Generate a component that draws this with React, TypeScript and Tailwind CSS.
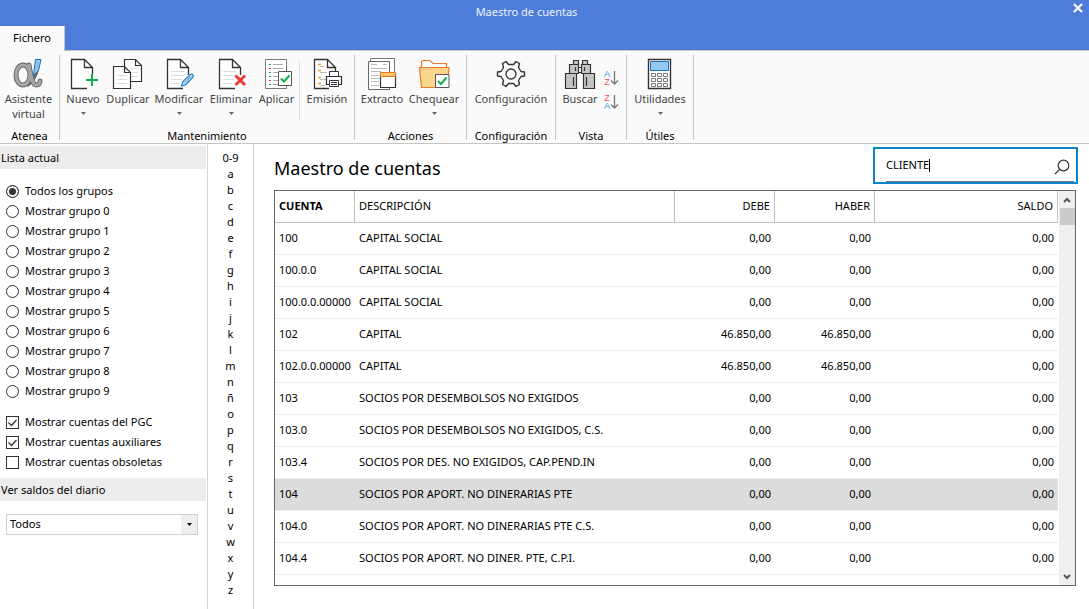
import { useState } from "react";
import type { ReactNode } from "react";

const LETTERS = ["0-9", ..."abcdefghijklmnñopqrstuvwxyz"];

const GROUPS = [
  "Todos los grupos",
  ...Array.from({ length: 10 }, (_, i) => `Mostrar grupo ${i}`),
];

const ROWS = [
  ["100", "CAPITAL SOCIAL", "0,00", "0,00", "0,00"],
  ["100.0.0", "CAPITAL SOCIAL", "0,00", "0,00", "0,00"],
  ["100.0.0.00000", "CAPITAL SOCIAL", "0,00", "0,00", "0,00"],
  ["102", "CAPITAL", "46.850,00", "46.850,00", "0,00"],
  ["102.0.0.00000", "CAPITAL", "46.850,00", "46.850,00", "0,00"],
  ["103", "SOCIOS POR DESEMBOLSOS NO EXIGIDOS", "0,00", "0,00", "0,00"],
  ["103.0", "SOCIOS POR DESEMBOLSOS NO EXIGIDOS, C.S.", "0,00", "0,00", "0,00"],
  ["103.4", "SOCIOS POR DES. NO EXIGIDOS, CAP.PEND.IN", "0,00", "0,00", "0,00"],
  ["104", "SOCIOS POR APORT. NO DINERARIAS PTE", "0,00", "0,00", "0,00"],
  ["104.0", "SOCIOS POR APORT. NO DINERARIAS PTE C.S.", "0,00", "0,00", "0,00"],
  ["104.4", "SOCIOS POR APORT. NO DINER. PTE, C.P.I.", "0,00", "0,00", "0,00"],
];

function Icon({ children }: { children: ReactNode }) {
  return (
    <svg viewBox="0 0 36 36" className="size-9 shrink-0" fill="none" stroke="#333" aria-hidden="true">
      {children}
    </svg>
  );
}

function Page() {
  return <path d="M27.5 20V12.5L19.5 4.5H6.5V33.5H22M19.5 4.5V12.5H27.5" fill="#fff" strokeWidth="1.3" />;
}

function PageLines() {
  return <path d="M10 16.5H23M10 20.5H23M10 24.5H21M10 28.5H19" stroke="#ddd" />;
}

// Atenea logo: a grey looped ribbon with a blue blade
function AlphaIcon() {
  return (
    <Icon>
      <g strokeLinecap="round">
        <ellipse cx="12" cy="20" rx="7" ry="10" stroke="#666" strokeWidth="5" />
        <path d="M18 10C20 18 20 30 25.5 30C28 30 29 28 29 26" stroke="#666" strokeWidth="5" />
        <path d="M26.5 15C25 21 21 27 17 30" stroke="#666" strokeWidth="3" />
        <ellipse cx="12" cy="20" rx="7" ry="10" stroke="#a6a6a6" strokeWidth="3" />
        <path d="M18 10C20 18 20 30 25.5 30C28 30 29 28 29 26" stroke="#a6a6a6" strokeWidth="3" />
      </g>
      <path d="M24.5 4.5H30L27.5 15.5L22.5 20.5Z" fill="#8cc6f0" stroke="#1d6fb5" />
    </Icon>
  );
}

function NewIcon() {
  return (
    <Icon>
      <Page />
      <path d="M27 19V31M21 25H33" stroke="#fafafa" strokeWidth="5" />
      <path d="M27 19V31M21 25H33" stroke="#12b04c" strokeWidth="2" />
    </Icon>
  );
}

function DuplicateIcon() {
  return (
    <Icon>
      <path d="M14.5 4.5H25.5L31.5 10.5V26.5H14.5ZM25.5 4.5V10.5H31.5" fill="#fff" strokeWidth="1.2" />
      <path d="M20 13.5H28M21 17.5H28M21 21.5H28" stroke="#ddd" />
      <path d="M3.5 11.5H14.5L20.5 17.5V33.5H3.5ZM14.5 11.5V17.5H20.5" fill="#fff" strokeWidth="1.2" />
      <path d="M7 20.5H17M7 24.5H17M7 28.5H17" stroke="#ddd" />
    </Icon>
  );
}

function EditIcon() {
  return (
    <Icon>
      <Page />
      <PageLines />
      <path d="M20.5 31L22 26.5L29.5 19.5C31 18.5 33 20.5 32 22L25 29.5Z" fill="#d9edfb" stroke="#2285cc" strokeWidth="1.3" />
      <path d="M23.5 28L30 21.5" stroke="#2285cc" />
    </Icon>
  );
}

function DeleteIcon() {
  return (
    <Icon>
      <Page />
      <PageLines />
      <path d="M22.5 20.5L32 30M32 20.5L22.5 30" stroke="#fafafa" strokeWidth="5" />
      <path d="M22.5 20.5L32 30M32 20.5L22.5 30" stroke="#ee3a3a" strokeWidth="3" />
    </Icon>
  );
}

function ApplyIcon() {
  return (
    <Icon>
      <path d="M6.5 4.5H27.5V33.5H6.5Z" fill="#fff" stroke="#777" />
      <path d="M14 9.5H24M14 13.5H24M14 17.5H24M14 21.5H19M14 25.5H19M14 29.5H24" stroke="#aaa" />
      <path d="M10 9.5H12M10 17.5H12M10 21.5H12M10 29.5H12" stroke="#12a04c" />
      <path d="M10 13.5H12M10 25.5H12" stroke="#d33" />
      <path d="M19.5 16.5H32.5V30.5H19.5Z" fill="#fff" stroke="#555" />
      <path d="M22 23.5L25 26.5L30.5 20.5" stroke="#12b04c" strokeWidth="2" />
    </Icon>
  );
}

function PrintIcon() {
  return (
    <Icon>
      <path d="M26.5 16V12.5L18.5 4.5H5.5V33.5H20M18.5 4.5V12.5H26.5" fill="#fff" strokeWidth="1.3" />
      <path d="M9 9.5H12M9 15.5H12M9 22.5H12M9 28.5H12" stroke="#f39a1e" strokeWidth="1.3" />
      <path d="M11 11.5H15M11 17.5H18M11 24.5H17M11 30.5H17" stroke="#bbb" />
      <path d="M20.5 22V16.5H29.5V22" fill="#fff" />
      <path d="M17.5 21.5H32.5V29.5H17.5Z" fill="#fff" strokeWidth="1.2" />
      <path d="M20.5 25.5H29.5V31.5H20.5ZM22 27.5H28M22 29.5H28" fill="#fff" />
    </Icon>
  );
}

function ExtractIcon() {
  return (
    <Icon>
      <path d="M6.5 3.5H30.5V31.5H6.5Z" fill="#fff" stroke="#777" />
      <path d="M4.5 6.5H25.5V34.5H4.5Z" fill="#fff" stroke="#666" />
      <path d="M7 9.5H13M19 9.5H23M7 13.5H23M7 16.5H17M7 20.5H15M7 23.5H15M7 26.5H15M7 30.5H15" stroke="#bbb" />
      <path d="M16.5 18.5H31.5V32.5H16.5Z" fill="#fff" strokeWidth="1.2" />
      <path d="M16.5 17.5H31.5V21.5H16.5Z" fill="#fcc66b" stroke="#e8792b" />
    </Icon>
  );
}

function CheckIcon() {
  return (
    <Icon>
      <path d="M5.5 13V6.5L7 5.5H14L17 8.5H30.5V13" fill="#fff" stroke="#e8792b" strokeWidth="1.2" />
      <path d="M3.5 12.5H33L31 32.5H5.5Z" fill="#f9d68c" stroke="#e8792b" strokeWidth="1.2" />
      <path d="M19.5 19.5H33V32.5H19.5Z" fill="#fff" stroke="#555" />
      <path d="M22 26L25 29L30.5 22.5" stroke="#12b04c" strokeWidth="2" />
    </Icon>
  );
}

function GearIcon() {
  return (
    <Icon>
      <circle cx="18" cy="19" r="5" strokeWidth="1.3" />
      <path
        d="M15.5 9.5H20.5L23 6.5L26.5 8.5L25.5 12.5L28 16.5L31.5 17V21L28 21.5L25.5 25.5L26.5 29.5L23 31.5L20.5 28.5H15.5L13 31.5L9.5 29.5L10.5 25.5L8 21.5L4.5 21V17L8 16.5L10.5 12.5L9.5 8.5L13 6.5Z"
        strokeWidth="1.4"
        strokeLinejoin="round"
      />
    </Icon>
  );
}

function BinocularsIcon() {
  return (
    <Icon>
      <g fill="#c4c4c4" strokeWidth="1.2">
        <path d="M11.5 5.5H16.5V9.5H11.5ZM20.5 5.5H25.5V9.5H20.5Z" />
        <path d="M15.5 12.5H21.5V17.5H15.5Z" fill="#fff" />
        <path d="M7.5 9.5H16.5V18.5H7.5ZM19.5 9.5H28.5V18.5H19.5Z" />
        <path d="M3.5 18.5H14.5V33.5H3.5ZM21.5 18.5H32.5V33.5H21.5Z" />
      </g>
      <path d="M13.5 12V16M22.5 12V16M11.5 22V31M24.5 22V31" strokeWidth="1.2" />
    </Icon>
  );
}

function CalculatorIcon() {
  return (
    <Icon>
      <path d="M6.5 4.5H28.5V33.5H6.5Z" fill="#fff" strokeWidth="1.4" />
      <path d="M8.5 6.5H26.5V15.5H8.5Z" fill="#93c8f0" stroke="#1d74bb" />
      <path
        d="M9.5 18.5H13.5V21.5H9.5ZM15.5 18.5H19.5V21.5H15.5ZM21.5 18.5H25.5V21.5H21.5ZM9.5 23.5H13.5V26.5H9.5ZM15.5 23.5H19.5V26.5H15.5ZM21.5 23.5H25.5V26.5H21.5ZM9.5 28.5H13.5V31.5H9.5ZM15.5 28.5H19.5V31.5H15.5ZM21.5 28.5H25.5V31.5H21.5Z"
        stroke="#777"
      />
    </Icon>
  );
}

function SortIcon({ desc = false }: { desc?: boolean }) {
  return (
    <span className="flex items-center">
      <span className="flex flex-col font-['Liberation_Sans',sans-serif] text-[9px] leading-2">
        <span className={desc ? "text-[#ee5560]" : "text-[#3d97d3]"}>{desc ? "Z" : "A"}</span>
        <span className={desc ? "text-[#3d97d3]" : "text-[#ee5560]"}>{desc ? "A" : "Z"}</span>
      </span>
      <svg viewBox="0 0 9 16" className="h-4 w-[9px]" aria-hidden="true">
        <path d="M4.5 1V14M1 10.5L4.5 14L8 10.5" fill="none" stroke="#777" strokeWidth="1.3" />
      </svg>
    </span>
  );
}

type ToolProps = { icon: ReactNode; label: string; line2?: string; menu?: boolean; className?: string };

function Tool({ icon, label, line2, menu, className }: ToolProps) {
  return (
    <button className={`flex flex-col items-center whitespace-nowrap text-[#444] ${className}`}>
      {icon}
      <span className="leading-[15px]">{label}</span>
      {line2 && <span className="leading-[15px]">{line2}</span>}
      {menu && (
        <svg viewBox="0 0 5 3" className="mt-1.5 h-[3px] w-[5px]" aria-hidden="true">
          <path d="M0 0H5L2.5 3Z" fill="#666" />
        </svg>
      )}
    </button>
  );
}

function Group({ label, children, className = "" }: { label: string; children: ReactNode; className?: string }) {
  return (
    <section className={`flex flex-col border-r border-[#c6c6c6] ${className}`}>
      <div className="flex flex-1 items-start">{children}</div>
      <h2 className="text-center leading-2 text-black">{label}</h2>
    </section>
  );
}

export default function App() {
  const [group, setGroup] = useState(GROUPS[0]);
  const [query, setQuery] = useState("CLIENTE");
  const [selected, setSelected] = useState("104");

  return (
    <div className="flex h-screen flex-col overflow-hidden bg-white font-['Noto_Sans',sans-serif] text-[11px] text-black">
      {/* Title bar */}
      <header className="border-b border-[#c6c6c6] bg-[#4d7cdb]">
        <div className="flex h-[26px] items-start">
          <h1 className="flex-1 pt-1 pr-5 text-center leading-4 text-[#eef2fb]">Maestro de cuentas</h1>
          <button aria-label="Cerrar" className="mt-[3px] mr-1.5">
            <svg viewBox="0 0 10 10" className="size-2.5">
              <path d="M1 1L9 9M9 1L1 9" stroke="#fff" strokeWidth="2.2" />
            </svg>
          </button>
        </div>
        <nav className="-mb-px flex h-[25px]">
          <button className="w-[65px] border-r border-[#c6c6c6] bg-[#fafafa]">Fichero</button>
        </nav>
      </header>

      {/* Ribbon */}
      <div className="flex h-[93px] border-b border-[#c6c6c6] bg-[#fafafa] pt-1 pb-[3px]">
        <Group label="Atenea" className="w-[60px]">
          <Tool icon={<AlphaIcon />} label="Asistente" line2="virtual" className="w-[57px]" />
        </Group>
        <Group label="Mantenimiento" className="w-[295px]">
          <Tool icon={<NewIcon />} label="Nuevo" menu className="w-[46px]" />
          <Tool icon={<DuplicateIcon />} label="Duplicar" className="w-11" />
          <Tool icon={<EditIcon />} label="Modificar" menu className="w-[58px]" />
          <Tool icon={<DeleteIcon />} label="Eliminar" menu className="w-[46px]" />
          <Tool icon={<ApplyIcon />} label="Aplicar" className="w-[45px]" />
          <div className="mt-1.5 h-[59px] border-l border-[#ddd]" />
          <Tool icon={<PrintIcon />} label="Emisión" className="w-[54px]" />
        </Group>
        <Group label="Acciones" className="w-28">
          <Tool icon={<ExtractIcon />} label="Extracto" className="w-[54px]" />
          <Tool icon={<CheckIcon />} label="Chequear" menu className="w-[50px]" />
        </Group>
        <Group label="Configuración" className="w-[89px]">
          <Tool icon={<GearIcon />} label="Configuración" className="w-[88px]" />
        </Group>
        <Group label="Vista" className="w-[71px]">
          <Tool icon={<BinocularsIcon />} label="Buscar" className="w-12" />
          <div className="flex flex-col gap-2 pt-[15px]">
            <button aria-label="Orden ascendente"><SortIcon /></button>
            <button aria-label="Orden descendente"><SortIcon desc /></button>
          </div>
        </Group>
        <Group label="Útiles" className="w-[67px]">
          <Tool icon={<CalculatorIcon />} label="Utilidades" menu className="w-[66px]" />
        </Group>
      </div>

      <div className="flex min-h-0 flex-1">
        {/* Filters */}
        <aside className="w-52 shrink-0 border-r border-[#d4d4d4] pt-0.5">
          <h2 className="mr-px h-[23px] bg-[#ececec] pl-px leading-[23px]">Lista actual</h2>
          <div className="pt-3 pl-1.5">
            {GROUPS.map((name) => (
              <label key={name} className="flex h-5 items-center gap-1.5">
                <input
                  type="radio"
                  name="grupo"
                  checked={group === name}
                  onChange={() => setGroup(name)}
                  className="size-[13px] appearance-none rounded-full border border-[#333] bg-white checked:bg-[#333] checked:shadow-[inset_0_0_0_2px_white]"
                />
                {name}
              </label>
            ))}
          </div>
          <div className="pt-[11px] pb-1.5 pl-1.5">
            {["Mostrar cuentas del PGC", "Mostrar cuentas auxiliares", "Mostrar cuentas obsoletas"].map((name, i) => (
              <label key={name} className="flex h-5 items-center gap-1.5">
                <span className="grid size-[13px]">
                  <input
                    type="checkbox"
                    defaultChecked={i < 2}
                    className="peer col-start-1 row-start-1 size-[13px] appearance-none border border-[#333] bg-white"
                  />
                  <svg viewBox="0 0 13 13" className="pointer-events-none invisible col-start-1 row-start-1 size-[13px] peer-checked:visible">
                    <path d="M2.5 6.5L5.5 9.5L10.5 4" fill="none" stroke="#333" strokeWidth="1.3" />
                  </svg>
                </span>
                {name}
              </label>
            ))}
          </div>
          <h2 className="mr-px h-[23px] bg-[#ececec] pl-px leading-[23px]">
            <label htmlFor="diario">Ver saldos del diario</label>
          </h2>
          <div className="mt-[13px] mr-[9px] ml-1.5 grid h-[21px] border border-[#d0d0d0]">
            <select id="diario" className="col-start-1 row-start-1 appearance-none bg-white pl-[3px]">
              <option>Todos</option>
            </select>
            <span className="pointer-events-none col-start-1 row-start-1 flex w-4 items-center justify-center justify-self-end bg-[#efefef]">
              <svg viewBox="0 0 5 3" className="h-[3px] w-[5px]" aria-hidden="true">
                <path d="M0 0H5L2.5 3Z" />
              </svg>
            </span>
          </div>
        </aside>

        {/* Alphabet index */}
        <nav className="flex w-[46px] shrink-0 flex-col border-r border-[#d4d4d4] pt-1.5">
          {LETTERS.map((letter) => (
            <button key={letter} className="h-4 leading-4">{letter}</button>
          ))}
        </nav>

        {/* Accounts */}
        <main className="flex min-w-0 flex-1 flex-col pt-[3px] pr-[13px] pb-[23px] pl-5">
          <div className="mb-1.5 flex items-center justify-between">
            <h2 className="pt-1 text-lg">Maestro de cuentas</h2>
            <div className="-mr-0.5 flex h-[37px] w-[205px] border-2 border-[#0a84cf] pr-0.5 pl-[11px]">
              <div className="relative flex flex-1 items-center border-b border-[#777]">
                <input
                  aria-label="Buscar cuenta"
                  value={query}
                  onChange={(e) => setQuery(e.target.value)}
                  className="w-full min-w-0 flex-1 caret-transparent outline-none"
                />
                <span className="pointer-events-none absolute inset-y-0 left-0 flex items-center" aria-hidden="true">
                  <span className="invisible">{query}</span>
                  <span className="h-[13px] border-l border-black" />
                </span>
                <button aria-label="Buscar" className="mt-1 mr-1">
                  <svg viewBox="0 0 16 16" className="size-4" fill="none" stroke="#333" strokeWidth="1.2">
                    <circle cx="9.5" cy="6.5" r="5.3" />
                    <path d="M5.7 10.3L1 15" />
                  </svg>
                </button>
              </div>
            </div>
          </div>

          <div className="flex min-h-0 flex-1 border border-[#666]">
            <div className="min-w-0 flex-1 overflow-hidden">
              <table className="w-full table-fixed border-separate border-spacing-0 whitespace-nowrap">
                <colgroup>
                  <col className="w-20" />
                  <col className="w-80" />
                  <col className="w-[100px]" />
                  <col className="w-[100px]" />
                  <col />
                </colgroup>
                <thead>
                  <tr className="h-8 *:border-r *:border-b *:border-[#c0c0c0] *:px-1 *:font-normal">
                    <th className="text-left !font-bold">CUENTA</th>
                    <th className="text-left">DESCRIPCIÓN</th>
                    <th className="text-right">DEBE</th>
                    <th className="text-right">HABER</th>
                    <th className="text-right">SALDO</th>
                  </tr>
                </thead>
                <tbody>
                  {ROWS.map((row) => (
                    <tr
                      key={row[0]}
                      onClick={() => setSelected(row[0])}
                      className={`h-8 *:border-b *:border-[#ececec] ${selected === row[0] ? "bg-[#dcdcdc]" : ""}`}
                    >
                      {row.map((cell, i) => (
                        <td key={i} className={i < 2 ? "pl-1" : "pr-1 text-right"}>{cell}</td>
                      ))}
                    </tr>
                  ))}
                </tbody>
              </table>
            </div>
            <div className="ml-px flex w-4 flex-col items-center bg-[#efefef]">
              <button aria-label="Subir" className="flex h-[17px] items-center">
                <svg viewBox="0 0 8 6" className="h-1.5 w-2"><path d="M1 5L4 2L7 5" fill="none" stroke="#555" strokeWidth="2" /></svg>
              </button>
              <div className="h-[17px] w-[15px] bg-[#cbcbcb]" />
              <button aria-label="Bajar" className="mt-auto flex h-[17px] items-center">
                <svg viewBox="0 0 8 6" className="h-1.5 w-2"><path d="M1 1L4 4L7 1" fill="none" stroke="#555" strokeWidth="2" /></svg>
              </button>
            </div>
          </div>
        </main>
      </div>
    </div>
  );
}
